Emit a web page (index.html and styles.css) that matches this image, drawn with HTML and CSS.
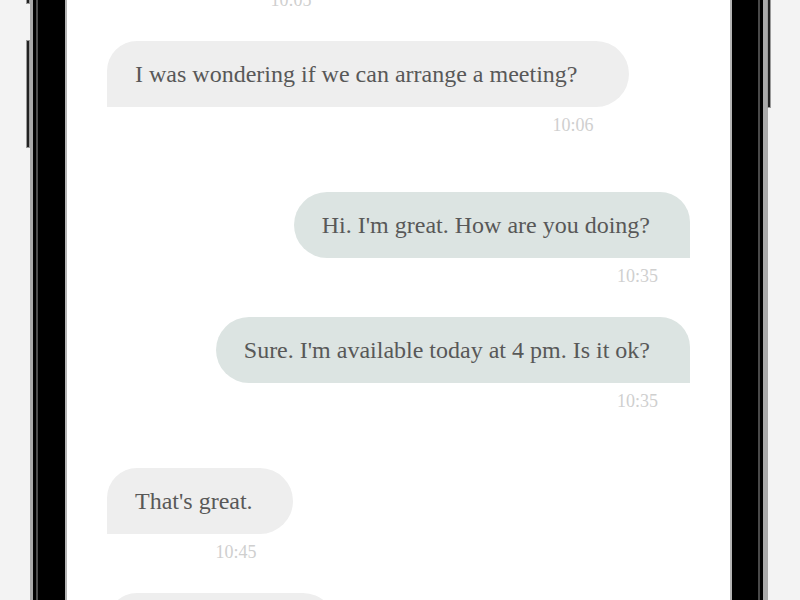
FILE: index.html
```html
<!DOCTYPE html>
<html>
<head>
<meta charset="utf-8">
<link rel="stylesheet" href="styles.css">
</head>
<body>
<div class="stage">
  <div class="phone">
    <span class="btn btn-left-top"></span>
    <span class="btn btn-left"></span>
    <span class="btn btn-right"></span>
    <div class="outer">
      <div class="ring">
        <div class="screen">
          <div class="chat">
            <div class="msg in">
              <div class="bubble">Hi! How are you?</div>
              <div class="ts">10:05</div>
            </div>
            <div class="msg in">
              <div class="bubble wide">I was wondering if we can arrange a meeting?</div>
              <div class="ts">10:06</div>
            </div>
            <div class="msg out switch">
              <div class="bubble">Hi. I'm great. How are you doing?</div>
              <div class="ts">10:35</div>
            </div>
            <div class="msg out">
              <div class="bubble">Sure. I'm available today at 4 pm. Is it ok?</div>
              <div class="ts">10:35</div>
            </div>
            <div class="msg in switch">
              <div class="bubble">That's great.</div>
              <div class="ts">10:45</div>
            </div>
            <div class="msg in">
              <div class="bubble">See you at 4 pm.</div>
              <div class="ts">10:46</div>
            </div>
          </div>
        </div>
      </div>
    </div>
  </div>
</div>
</body>
</html>
```

FILE: styles.css
```css
html, body {
  margin: 0;
  padding: 0;
  height: 600px;
  overflow: hidden;
  background: #f3f3f3;
}

.stage {
  display: flex;
  padding-left: 30px;
  height: 600px;
}

.phone {
  position: relative;
  width: 738px;
  height: 600px;
  background: #a9a9a9;
  padding: 0 5px 0 3px;
  box-sizing: border-box;
}

.btn {
  position: absolute;
  width: 2px;
  background: #222;
  border: 1px solid #9a9a9a;
}
.btn-left-top { left: -4px; top: -4px; height: 6px; }
.btn-left { left: -4px; top: 40px; height: 106px; }
.btn-right { right: -3px; top: -4px; height: 110px; }

.outer {
  height: 100%;
  background: #000;
  padding: 0 3px;
}

.ring {
  height: 100%;
  background: #000;
  border-left: 2px solid #4a4a4a;
  border-right: 2px solid #4a4a4a;
  padding: 0 28px 0 29px;
}

.screen {
  height: 100%;
  background: #fff;
  box-shadow: 0 0 0 2px #b4b4b4;
  overflow: hidden;
}

.chat {
  display: flex;
  flex-direction: column;
  padding: 0 40px;
  margin-top: -84px;
  font-family: "Liberation Serif", "Times New Roman", serif;
}

.msg {
  display: flex;
  flex-direction: column;
  margin-bottom: 31px;
}
.msg.switch { margin-top: 26px; }
.msg.in { align-self: flex-start; }
.msg.out { align-self: flex-end; }

.bubble {
  font-size: 24px;
  line-height: 28px;
  color: #585858;
  padding: 19px 40px 19px 28px;
}
.bubble.wide { padding-right: 52px; }
.in .bubble {
  background: #eeeeee;
  border-radius: 30px 33px 33px 0;
}
.out .bubble {
  background: #dce4e2;
  border-radius: 33px 30px 0 33px;
}

.ts {
  align-self: flex-end;
  margin-top: 8px;
  font-size: 18px;
  line-height: 20px;
  color: #cfcfcf;
}
.in .ts { padding-right: 36px; }
.out .ts { padding-right: 32px; }
```
